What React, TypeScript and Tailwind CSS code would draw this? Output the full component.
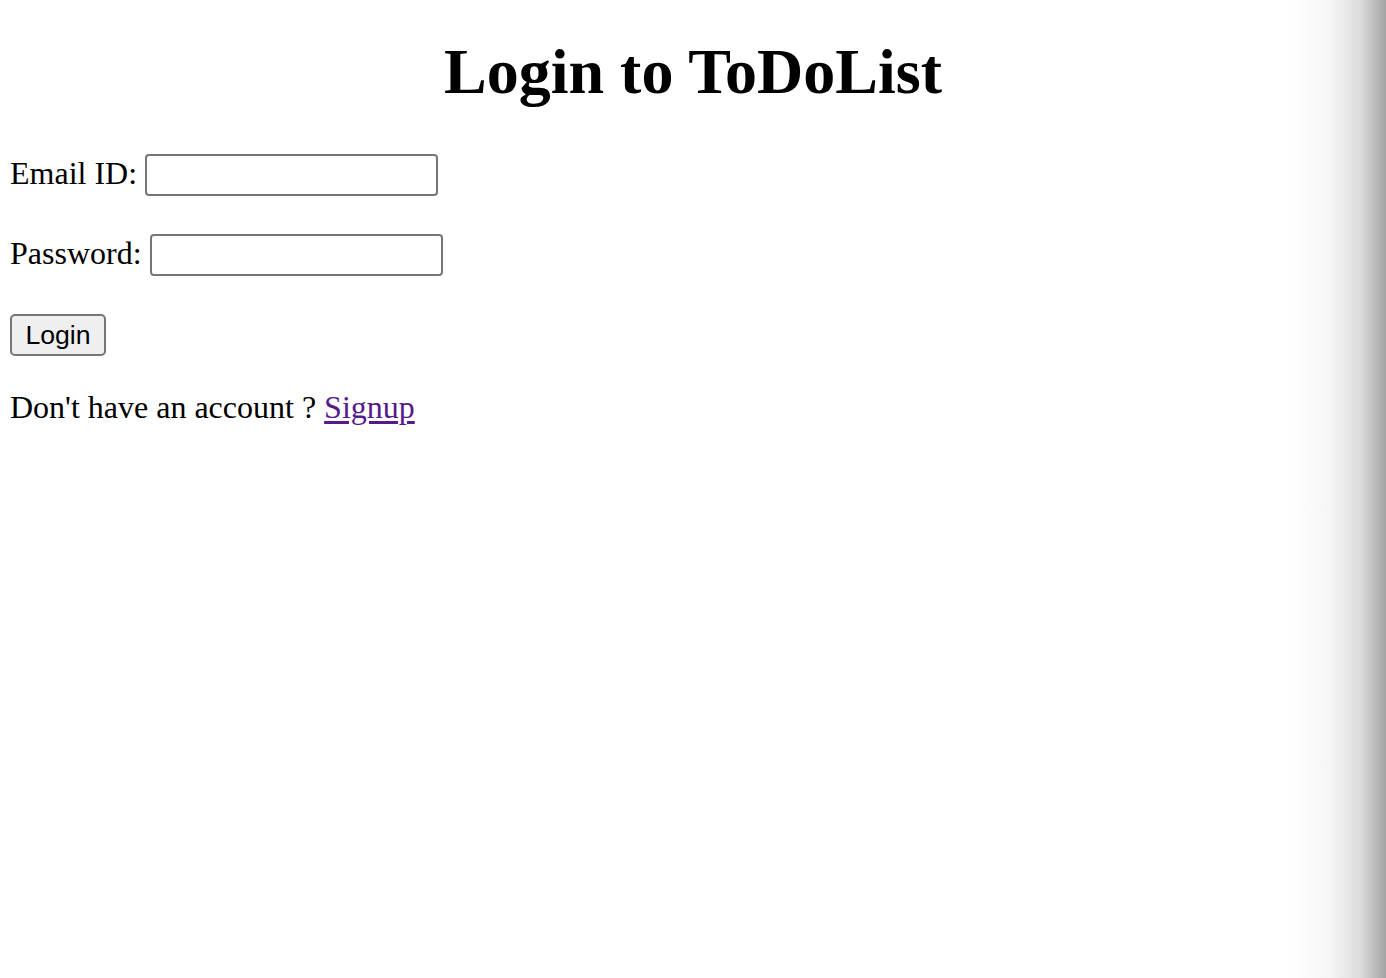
import React from 'react';

const serif = "font-['Liberation_Serif','Times_New_Roman',serif]";

export default function App() {
  return (
    <div
      className={`min-h-screen w-full bg-[linear-gradient(to_right,#ffffff_0px,#ffffff_1290px,#f6f6f6_1330px,#dcdcdc_1360px,#a4a4a4_1386px)] text-black ${serif}`}
    >
      <h1 className="pt-[40px] text-center text-[64px] font-bold leading-[64px]">Login to ToDoList</h1>

      <form className="mt-[50px] flex flex-col items-start pl-[10px] text-[32px] leading-[37px]" onSubmit={(e) => e.preventDefault()}>
        <div className="flex items-center gap-[8px]">
          <label htmlFor="email" className="pb-[3px]">Email ID:</label>
          <input
            id="email"
            type="email"
            className="h-[42px] w-[293px] rounded-[4px] border-2 border-[#767676] bg-white px-[4px] text-[26px] outline-none"
          />
        </div>

        <div className="mt-[38px] flex items-center gap-[8px]">
          <label htmlFor="password" className="pb-[3px]">Password:</label>
          <input
            id="password"
            type="password"
            className="h-[42px] w-[293px] rounded-[4px] border-2 border-[#767676] bg-white px-[4px] text-[26px] outline-none"
          />
        </div>

        <button
          type="submit"
          className="mt-[38px] flex h-[42px] w-[96px] items-center justify-center rounded-[5px] border-2 border-[#767676] bg-[#efefef] font-['Liberation_Sans',Arial,sans-serif] text-[26.67px] leading-none text-black"
        >
          Login
        </button>

        <p className="mt-[33px]">
          Don't have an account ?{' '}
          <a href="#" className="text-[#551a8b] underline underline-offset-[3px]">
            Signup
          </a>
        </p>
      </form>
    </div>
  );
}
